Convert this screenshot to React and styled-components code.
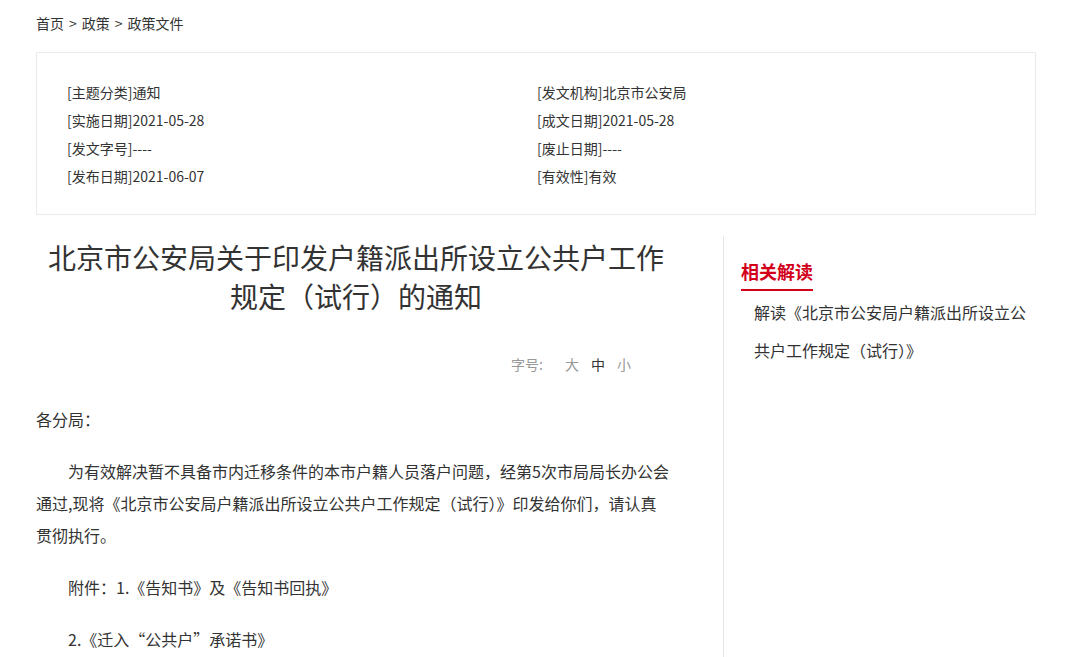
import React from "react";
import styled, { createGlobalStyle } from "styled-components";

const GlobalStyle = createGlobalStyle`
  body {
    margin: 0;
    background: #fff;
    color: #333;
    font-family: "Noto Sans CJK SC", "Noto Sans", sans-serif;
  }
`;

const Page = styled.div`
  width: 1000px;
  margin-left: 36px;
`;

const Crumbs = styled.div`
  font-size: 14px;
  line-height: 20px;
  padding-top: 13px;
  height: 52px;
  box-sizing: border-box;
  color: #333;
  span {
    margin: 0 5px;
  }
`;

const InfoBox = styled.div`
  border: 1px solid #ebebe6;
  padding: 25px 30px 24px;
  display: grid;
  grid-template-columns: 470px 1fr;
  font-size: 14px;
  line-height: 28px;
`;

const Main = styled.div`
  display: flex;
  margin-top: 21px;
`;

const Article = styled.div`
  width: 640px;
  flex-shrink: 0;
`;

const Title = styled.h1`
  margin: 0;
  padding-top: 2px;
  font-size: 28px;
  line-height: 39px;
  font-weight: normal;
  text-align: center;
  color: #333;
`;

const FontBar = styled.div`
  margin: 36px 0 27px;
  padding-right: 45px;
  text-align: right;
  font-size: 14px;
  line-height: 24px;
  color: #999;
`;

const BarLabel = styled.span`
  margin-right: 10px;
`;

const SizeOpt = styled.span`
  margin-left: 12px;
  color: ${(p) => (p.$active ? "#333" : "#999")};
  cursor: pointer;
`;

const Para = styled.p`
  margin: 0 0 20px;
  font-size: 16px;
  line-height: 32px;
  text-indent: ${(p) => (p.$indent ? "2em" : "0")};
`;

const Sidebar = styled.aside`
  flex: 1;
  margin-left: 47px;
  border-left: 1px solid #e6e6e6;
  padding: 23px 0 0 17px;
`;

const SideHead = styled.div`
  display: inline-block;
  font-size: 18px;
  font-weight: bold;
  line-height: 24px;
  color: #d2001a;
  padding-bottom: 6px;
  border-bottom: 2px solid #d2001a;
`;

const SideList = styled.ul`
  list-style: none;
  margin: 2px 0 0;
  padding: 0 0 0 13px;
  width: 282px;
`;

const SideItem = styled.li`
  font-size: 16px;
  line-height: 38px;
  color: #333;
`;

const info = [
  ["[主题分类]通知", "[发文机构]北京市公安局"],
  ["[实施日期]2021-05-28", "[成文日期]2021-05-28"],
  ["[发文字号]----", "[废止日期]----"],
  ["[发布日期]2021-06-07", "[有效性]有效"],
];

export default function App() {
  return (
    <Page>
      <GlobalStyle />
      <Crumbs>
        首页<span>&gt;</span>政策<span>&gt;</span>政策文件
      </Crumbs>
      <InfoBox>
        {info.flat().map((t) => (
          <div key={t}>{t}</div>
        ))}
      </InfoBox>
      <Main>
        <Article>
          <Title>北京市公安局关于印发户籍派出所设立公共户工作规定（试行）的通知</Title>
          <FontBar>
            <BarLabel>字号:</BarLabel>
            <SizeOpt>大</SizeOpt>
            <SizeOpt $active>中</SizeOpt>
            <SizeOpt>小</SizeOpt>
          </FontBar>
          <Para>各分局：</Para>
          <Para $indent>
            为有效解决暂不具备市内迁移条件的本市户籍人员落户问题，经第5次市局局长办公会通过,现将《北京市公安局户籍派出所设立公共户工作规定（试行）》印发给你们，请认真
            <br />
            贯彻执行。
          </Para>
          <Para $indent>附件：1.《告知书》及《告知书回执》</Para>
          <Para $indent>2.《迁入“公共户”承诺书》</Para>
        </Article>
        <Sidebar>
          <SideHead>相关解读</SideHead>
          <SideList>
            <SideItem>解读《北京市公安局户籍派出所设立公共户工作规定（试行）》</SideItem>
          </SideList>
        </Sidebar>
      </Main>
    </Page>
  );
}
